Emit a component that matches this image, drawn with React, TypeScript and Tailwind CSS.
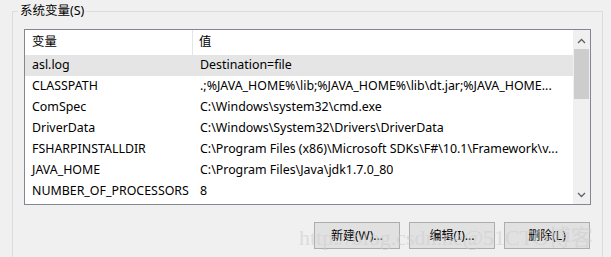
import React from "react";

const rows: [string, string][] = [
  ["asl.log", "Destination=file"],
  ["CLASSPATH", ".;%JAVA_HOME%\\lib;%JAVA_HOME%\\lib\\dt.jar;%JAVA_HOME..."],
  ["ComSpec", "C:\\Windows\\system32\\cmd.exe"],
  ["DriverData", "C:\\Windows\\System32\\Drivers\\DriverData"],
  ["FSHARPINSTALLDIR", "C:\\Program Files (x86)\\Microsoft SDKs\\F#\\10.1\\Framework\\v..."],
  ["JAVA_HOME", "C:\\Program Files\\Java\\jdk1.7.0_80"],
  ["NUMBER_OF_PROCESSORS", "8"],
];

const font = { fontFamily: '"Noto Sans", "Noto Sans CJK SC", sans-serif' };

export default function App() {
  return (
    <div
      className="relative w-[611px] h-[257px] bg-[#f0f0f0] text-[12.4px] text-black overflow-hidden"
      style={font}
    >
      {/* group box */}
      <div className="absolute left-[12px] top-[11px] w-[591px] h-[260px] border border-[#dcdcdc]" />
      <div className="absolute left-[18px] top-[2px] px-[2px] bg-[#f0f0f0] leading-[18px] text-[12.5px]">系统变量(S)</div>

      <div className="relative pt-[29px] pl-[24px] pr-[20px]">
        {/* list */}
        <div className="flex w-[567px] h-[176px] border border-[#828790] bg-white">
          <div className="flex flex-col flex-1 min-w-0">
            <div className="flex h-[25px] items-center">
              <div className="w-[168px] pl-[7px] border-r border-[#e5e5e5] h-full flex items-center">变量</div>
              <div className="pl-[6px]">值</div>
            </div>
            {rows.map(([k, v], i) => (
              <div
                key={k}
                className={`flex h-[21px] items-center whitespace-nowrap ${i === 0 ? "bg-[#e5e5e5]" : ""}`}
              >
                <div className="w-[168px] pl-[7px] overflow-hidden">{k}</div>
                <div className="pl-[7px] overflow-hidden">{v}</div>
              </div>
            ))}
          </div>
          {/* scrollbar */}
          <div className="w-[17px] bg-[#f0f0f0] flex flex-col items-center">
            <div className="h-[17px] flex items-center justify-center mt-[2px]">
              <svg width="9" height="6" viewBox="0 0 9 6">
                <path d="M1 5 L4.5 1.5 L8 5" fill="none" stroke="#606060" strokeWidth="1.3" />
              </svg>
            </div>
            <div className="w-[15px] h-[50px] bg-[#cdcdcd] mt-[0px]" />
            <div className="flex-1" />
            <div className="h-[17px] flex items-center justify-center mb-[1px]">
              <svg width="9" height="6" viewBox="0 0 9 6">
                <path d="M1 1 L4.5 4.5 L8 1" fill="none" stroke="#606060" strokeWidth="1.3" />
              </svg>
            </div>
          </div>
        </div>

        {/* buttons */}
        <div className="flex justify-end gap-[9px] mt-[17px] pr-[1px]">
          {["新建(W)...", "编辑(I)...", "删除(L)"].map((t) => (
            <div
              key={t}
              className="w-[86px] h-[27px] border border-[#adadad] bg-[#e1e1e1] flex items-center justify-center text-[12px]"
            >
              {t}
            </div>
          ))}
        </div>
      </div>

      {/* watermark */}
      <div
        className="absolute left-[299px] top-[221px] text-[22px] text-[#cfcfcf] opacity-60 whitespace-nowrap pointer-events-none"
        style={{ fontFamily: '"Liberation Serif", "Noto Sans CJK SC", serif' }}
      >
        http://blog.csdn.ne@51CTO博客
      </div>
    </div>
  );
}
